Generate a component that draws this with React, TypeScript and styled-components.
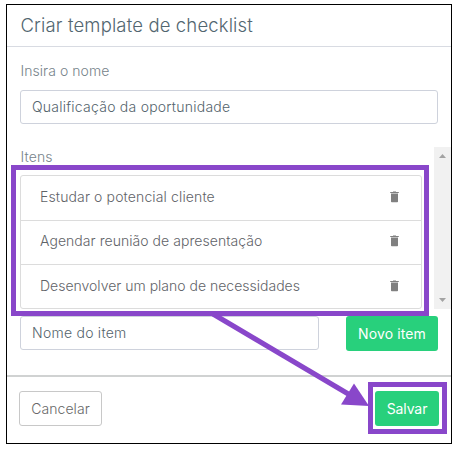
import React from "react";
import styled, { createGlobalStyle } from "styled-components";

const GlobalStyle = createGlobalStyle`
  * { box-sizing: border-box; }
  body { margin: 0; background: #fff; font-family: "Inter", "Liberation Sans", sans-serif; font-weight: 300; }
  button, input { font: inherit; }
`;

const Page = styled.main`
  position: relative;
  width: 455px;
  height: 450px;
  padding: 4px 0 0 6px;
`;

const Dialog = styled.section`
  width: 446px;
  height: 440px;
  border: 1px solid #000;
  display: flex;
  flex-direction: column;
  background: #fff;
`;

const Header = styled.header`
  flex: none;
  height: 42px;
  padding-left: 13.5px;
  border-bottom: 1px solid #d8dbe2;
`;

const Text = styled.span<{ $spacing?: number }>`
  display: block;
  white-space: nowrap;
  letter-spacing: ${(p) => p.$spacing ?? 0}px;
`;

const Title = styled.h1`
  margin: 0;
  font-size: 18.5px;
  font-weight: 300;
  line-height: 41px;
  color: #526670;
`;

const Body = styled.div`
  flex: none;
  height: 328px;
  display: flex;
  flex-direction: column;
`;

const Label = styled.div`
  font-size: 14px;
  line-height: 20px;
  padding-left: 0.5px;
  color: #76838a;
`;

const NameField = styled.div`
  padding: 14px 13px 0;
  height: 100px;
`;

const Field = styled.div<{ $width: number }>`
  width: ${(p) => p.$width}px;
  height: 34px;
  padding: 0 11px;
  border: 1px solid #ced2dc;
  border-radius: 3px;
  font-size: 14px;
  line-height: 32px;
  color: #54646c;
`;

const NameInput = styled(Field)`
  margin-top: 9px;
`;

const ScrollArea = styled.div`
  display: flex;
  justify-content: space-between;
  height: 162px;
  padding-left: 13px;
`;

const ListColumn = styled.div`
  width: 402px;
`;

const List = styled.ul`
  list-style: none;
  margin: 8px 0 0;
  padding: 0;
  height: 134px;
  border: 1px solid #dcdcdc;
  border-radius: 3px;
`;

const Row = styled.li`
  display: flex;
  align-items: center;
  justify-content: space-between;
  height: 44px;
  padding: 0 22px 3px 19px;
  font-size: 14px;
  color: #5f6368;
  &:first-child { height: 45px; }
  &:nth-child(2) { padding-bottom: 4px; }
  &:not(:last-child) { border-bottom: 1px solid #dcdcdc; }
`;

const Scrollbar = styled.div`
  width: 17px;
  height: 162px;
  padding: 7px 0 7px;
  background: #f1f1f1;
  display: flex;
  flex-direction: column;
  align-items: center;
  justify-content: space-between;
`;

const AddRow = styled.div`
  display: flex;
  justify-content: space-between;
  padding: 7px 13px 0;
`;

const Button = styled.button<{ $width: number; $outlined?: boolean }>`
  width: ${(p) => p.$width}px;
  height: 35px;
  padding: 0;
  border: ${(p) => (p.$outlined ? "1px solid #c8c8c8" : "0")};
  border-radius: 3px;
  background: ${(p) => (p.$outlined ? "#fff" : "#28d07c")};
  color: ${(p) => (p.$outlined ? "#686868" : "#fff")};
  font-size: 14px;
  font-weight: ${(p) => (p.$outlined ? 300 : 400)};
  display: flex;
  align-items: center;
  justify-content: center;
`;

const Footer = styled.footer`
  flex: 1;
  display: flex;
  justify-content: space-between;
  align-items: flex-start;
  padding: 14px 12px 0;
  border-top: 2px solid #d0d2d2;
`;

const Highlight = styled.div<{ $x: number; $y: number; $w: number; $h: number }>`
  position: absolute;
  left: ${(p) => p.$x}px;
  top: ${(p) => p.$y}px;
  width: ${(p) => p.$w}px;
  height: ${(p) => p.$h}px;
  border: 5px solid #8947ca;
  pointer-events: none;
`;

const ArrowLayer = styled.svg`
  position: absolute;
  inset: 0;
  pointer-events: none;
`;

const Trash = () => (
  <svg width="9" height="12" viewBox="0 0 9 12" fill="#808080">
    <path d="M3 .3h3V1H3z" opacity=".75" />
    <path d="M.2 1h8.6v1H.2z" />
    <path d="M1 2.500h7v8q0 .8-.8.8H1.800q-.8 0-.8-.8z" />
  </svg>
);

const Caret = ({ down = false }: { down?: boolean }) => (
  <svg width="7" height="4" viewBox="0 0 7 4" fill="#a3a3a3">
    <path d={down ? "M0 0h7L3.5 4z" : "M0 4h7L3.5 0z"} />
  </svg>
);

const items = [
  { name: "Estudar o potencial cliente", spacing: 0.13 },
  { name: "Agendar reunião de apresentação", spacing: 0.05 },
  { name: "Desenvolver um plano de necessidades", spacing: 0 },
];

export default function App() {
  return (
    <Page>
      <GlobalStyle />
      <Dialog>
        <Header>
          <Title><Text $spacing={0.14}>Criar template de checklist</Text></Title>
        </Header>
        <Body>
          <NameField>
            <Label><Text $spacing={0.05}>Insira o nome</Text></Label>
            <NameInput $width={418}><Text $spacing={0.24}>Qualificação da oportunidade</Text></NameInput>
          </NameField>
          <ScrollArea>
            <ListColumn>
              <Label><Text $spacing={0.1}>Itens</Text></Label>
              <List>
                {items.map((item) => (
                  <Row key={item.name}>
                    <Text $spacing={item.spacing}>{item.name}</Text>
                    <Trash />
                  </Row>
                ))}
              </List>
            </ListColumn>
            <Scrollbar><Caret /><Caret down /></Scrollbar>
          </ScrollArea>
          <AddRow>
            <Field $width={299}><Text $spacing={0.25}>Nome do item</Text></Field>
            <Button $width={92}><Text $spacing={0.1}>Novo item</Text></Button>
          </AddRow>
        </Body>
        <Footer>
          <Button $width={83} $outlined><Text $spacing={0.05}>Cancelar</Text></Button>
          <Button $width={64}><Text $spacing={-0.1}>Salvar</Text></Button>
        </Footer>
      </Dialog>
      <Highlight $x={11} $y={165} $w={418} $h={151} />
      <Highlight $x={368} $y={382} $w={79} $h={52} />
      <ArrowLayer width="455" height="450" viewBox="0 0 455 450">
        <path d="M213 314L350 395" stroke="#8947ca" strokeWidth="5" />
        <path d="M369 406L354 383.500L341 404.500Z" fill="#8947ca" />
      </ArrowLayer>
    </Page>
  );
}
